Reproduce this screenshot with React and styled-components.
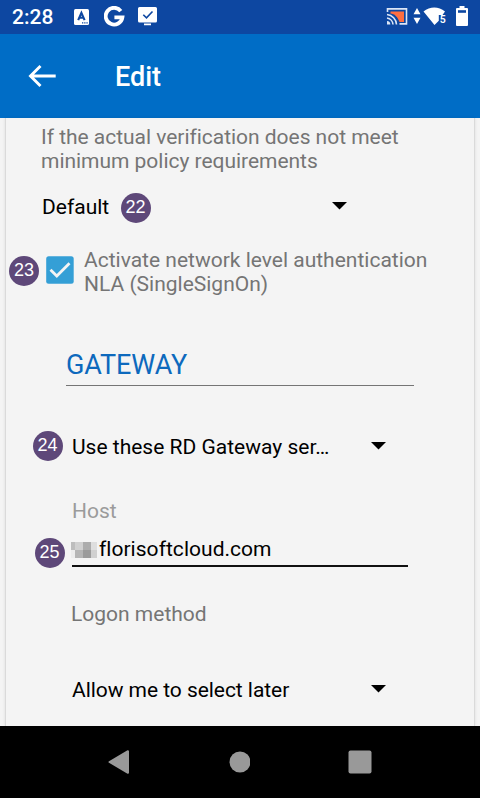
import React from "react";
import styled, { createGlobalStyle } from "styled-components";

const Global = createGlobalStyle`
  * { box-sizing: border-box; }
  body { margin: 0; background: #f4f4f4; font-family: Roboto, "Liberation Sans", sans-serif; }
`;

const Screen = styled.div`
  width: 480px;
  height: 798px;
  display: flex;
  flex-direction: column;
  overflow: hidden;
`;

const StatusBar = styled.header`
  height: 34px;
  flex: none;
  display: flex;
  align-items: center;
  background: #0d47a1;
  color: #fff;
`;

const Clock = styled.span`
  width: 74px;
  padding-left: 12px;
  font-size: 21px;
  font-weight: 500;
  line-height: 34px;
  letter-spacing: 0;
`;

const StatusIcons = styled.svg`
  display: block;
  flex: none;
  margin-left: ${(p) => p.$gap || 0}px;
`;

const AppBar = styled.nav`
  height: 84px;
  flex: none;
  display: flex;
  align-items: center;
  padding-left: 28px;
  background: #006dc6;
  color: #fff;
`;

const Title = styled.h1`
  margin: 2px 0 0 59px;
  font-size: 27px;
  font-weight: 500;
  line-height: 32px;
`;

const Content = styled.main`
  flex: 1;
  min-height: 0;
  padding: 0 5px;
  background: #f4f4f4;
`;

const Sheet = styled.section`
  height: 100%;
  display: flex;
  flex-direction: column;
  padding-top: 7px;
  border: solid #dadada;
  border-width: 0 1px;
  box-shadow: 0 0 3px rgba(0, 0, 0, 0.1);
`;

const Row = styled.div`
  display: flex;
  flex: none;
  height: ${(p) => p.$h || 24}px;
  margin-top: ${(p) => p.$top || 0}px;
  padding-left: ${(p) => p.$left || 0}px;
`;

const Text = styled.span`
  width: ${(p) => (p.$w ? p.$w + "px" : "auto")};
  flex: none;
  font-size: 21px;
  line-height: 24px;
  white-space: pre;
  color: ${(p) => p.$color || "#000"};
  letter-spacing: ${(p) => (p.$spacing ? p.$spacing + "px" : "normal")};
`;

const Badge = styled.span`
  width: 30px;
  height: 30px;
  flex: none;
  margin: ${(p) => p.$margin || 0};
  border-radius: 50%;
  background: #5e4879;
  color: #fff;
  font: 18px/29px "Liberation Sans", Arial, sans-serif;
  text-align: center;
`;

const Caret = styled.svg`
  display: block;
  flex: none;
  margin-top: 7px;
`;

const Checkbox = styled.svg`
  display: block;
  flex: none;
  margin: 8px 10px 0 7px;
`;

const SectionTitle = styled.h2`
  flex: none;
  width: 348px;
  height: 37px;
  margin: 53px 0 0 60px;
  border-bottom: 1px solid #757575;
  color: #0d69bd;
  font-size: 27px;
  font-weight: 400;
  line-height: 32px;
  letter-spacing: -0.1px;
`;

const HostField = styled.div`
  width: 336px;
  height: 30px;
  display: flex;
  border-bottom: 2px solid #111;
`;

const Mosaic = styled.svg`
  display: block;
  flex: none;
  margin: 5px 1px 0 -1px;
`;

const NavBar = styled.footer`
  height: 72px;
  flex: none;
  display: flex;
  align-items: center;
  justify-content: space-between;
  padding: 0 108px;
  background: #000;
`;

const DownCaret = () => (
  <Caret width="15" height="8" viewBox="0 0 15 8">
    <path d="M0 0h15L7.5 7.6z" fill="#000" />
  </Caret>
);

const blocks = [
  [0, 0, 4, 8, "#bdbdbd"], [4, 0, 8, 8, "#d0d0d0"], [12, 0, 8, 8, "#acacac"], [20, 0, 6, 8, "#dedede"],
  [0, 8, 4, 8, "#ececec"], [4, 8, 8, 8, "#b5b5b5"], [12, 8, 8, 8, "#9b9b9b"], [20, 8, 6, 8, "#d0d0d0"],
];

export default function App() {
  return (
    <>
      <Global />
      <Screen>
        <StatusBar>
          <Clock>2:28</Clock>
          <StatusIcons width="15" height="16" viewBox="0 0 15 16" fill="#fff">
            <rect width="15" height="16" rx="1.5" />
            <path d="M4.2 11.2 7.4 3.8l3.2 7.4M5.5 8.8h3.9" fill="none" stroke="#0d47a1" strokeWidth="2.1" />
            <path d="M8 13.2h1.3v1.3H8zM10.2 13.2h1.3v1.3h-1.3zM12.4 13.2h1.3v1.3h-1.3z" fill="#0d47a1" />
          </StatusIcons>
          <StatusIcons $gap={15} width="21" height="22" viewBox="0 0 21 22">
            <path d="M16.8 5.1A8.4 8.4 0 1 0 18.4 11.400H10.400" fill="none" stroke="#fff" strokeWidth="3.8" />
          </StatusIcons>
          <StatusIcons $gap={13} width="20" height="20" viewBox="0 0 20 20">
            <path d="M1.500 0h16a1.500 1.500 0 0 1 1.500 1.500v12.500a1.500 1.500 0 0 1-1.500 1.500H1.500A1.500 1.500 0 0 1 0 14V1.500A1.500 1.500 0 0 1 1.500 0zM6 16.500h7v1.800H6z" fill="#fff" />
            <path d="m5.300 7.700 3.200 3.100 6-6.300" fill="none" stroke="#0d47a1" strokeWidth="1.600" />
          </StatusIcons>
          <StatusIcons $gap={228} width="22" height="20" viewBox="0 0 22 20" fill="none" stroke="#dce6f6" strokeWidth="1.600">
            <path d="M4.500 4.500h13.500v10.500H13.500C11.500 10 8.500 6.500 4.500 6.500z" fill="#ff6e40" stroke="none" />
            <path d="M1.500 5V1.900H20.500v15H13.500M1 7.500a10.500 10.500 0 0 1 9.500 10M1 11a7 7 0 0 1 6 6.500" />
            <path d="M1 14A3.500 3.500 0 0 1 4.300 17.500H1z" fill="#dce6f6" stroke="none" />
          </StatusIcons>
          <StatusIcons $gap={5} width="8" height="18" viewBox="0 0 8 18" fill="#fff">
            <path d="M.5 6.200 4 0l3.500 6.200zM.5 9.800h7L4 16z" />
          </StatusIcons>
          <StatusIcons $gap={2} width="24" height="20" viewBox="0 0 24 20">
            <path d="M.5 4.500C7-1 15.500-1 22 4.500L19.500 8h-3.700v5.800L11.500 18z" fill="#fff" />
            <text x="16.700" y="16" fill="#fff" fontFamily="Roboto, sans-serif" fontSize="10.500" fontWeight="600">5</text>
          </StatusIcons>
          <StatusIcons $gap={9} width="12" height="22" viewBox="0 0 12 22">
            <path d="M3.500 0h5v2H11q1 0 1 1v16q0 1-1 1H1q-1 0-1-1V3q0-1 1-1h2.500z" fill="#fff" />
            <path d="M2 4.200h8v2.600H2z" fill="#0d47a1" />
          </StatusIcons>
        </StatusBar>
        <AppBar>
          <StatusIcons width="28" height="24" viewBox="0 0 28 24" fill="none" stroke="#fff" strokeWidth="2.900">
            <path d="M12.500 2 2.500 12l10 10M2.500 12H27.700" />
          </StatusIcons>
          <Title>Edit</Title>
        </AppBar>
        <Content>
          <Sheet>
            <Row $h={48} $left={35}>
              <Text $color="#757575" $spacing={-0.03}>{"If the actual verification does not meet\nminimum policy requirements"}</Text>
            </Row>
            <Row $top={22} $left={36}>
              <Text $w={78.5}>Default</Text>
              <Badge $margin="-2.5px 0 0">22</Badge>
              <Row $left={181}><DownCaret /></Row>
            </Row>
            <Row $top={29} $left={3} $h={48}>
              <Badge $margin="8px 0 0">23</Badge>
              <Checkbox width="28" height="28" viewBox="0 0 28 28">
                <rect x=".2" y=".2" width="27.500" height="27.500" rx="2.500" fill="#349fd6" />
                <path d="m4.500 13.800 6.300 6.300L23.500 7.200" fill="none" stroke="#f4f4f4" strokeWidth="2.800" />
              </Checkbox>
              <Text $color="#757575">{"Activate network level authentication\nNLA (SingleSignOn)"}</Text>
            </Row>
            <SectionTitle>GATEWAY</SectionTitle>
            <Row $top={49} $left={26.5}>
              <Badge $margin="-4px 9.5px 0 0">24</Badge>
              <Text $w={298.5}>Use these RD Gateway ser…</Text>
              <DownCaret />
            </Row>
            <Row $top={40} $left={66}>
              <Text $color="#9b9b9b">Host</Text>
            </Row>
            <Row $top={14} $left={28.5} $h={30}>
              <Badge $margin="0.5px 7.5px 0 0">25</Badge>
              <HostField>
                <Mosaic width="27" height="16" viewBox="0 0 27 16" shapeRendering="crispEdges">
                  {blocks.map(([x, y, w, h, fill]) => (
                    <rect key={`${x}-${y}`} x={x} y={y} width={w} height={h} fill={fill} />
                  ))}
                </Mosaic>
                <Text $spacing={0.03}>florisoftcloud.com</Text>
              </HostField>
            </Row>
            <Row $top={35} $left={65}>
              <Text $color="#757575">Logon method</Text>
            </Row>
            <Row $top={52} $left={66}>
              <Text $w={298.5} $spacing={-0.05}>Allow me to select later</Text>
              <DownCaret />
            </Row>
          </Sheet>
        </Content>
        <NavBar>
          <svg width="22" height="24" viewBox="0 0 22 24">
            <path d="M1.500 12 20 1.200v21.600z" fill="#999" stroke="#999" strokeWidth="2" strokeLinejoin="round" />
          </svg>
          <svg width="22" height="22" viewBox="0 0 22 22"><circle cx="12" cy="11" r="10.500" fill="#999" /></svg>
          <svg width="24" height="24" viewBox="0 0 24 24"><rect x=".5" y=".5" width="23" height="23" rx="2" fill="#999" /></svg>
        </NavBar>
      </Screen>
    </>
  );
}
